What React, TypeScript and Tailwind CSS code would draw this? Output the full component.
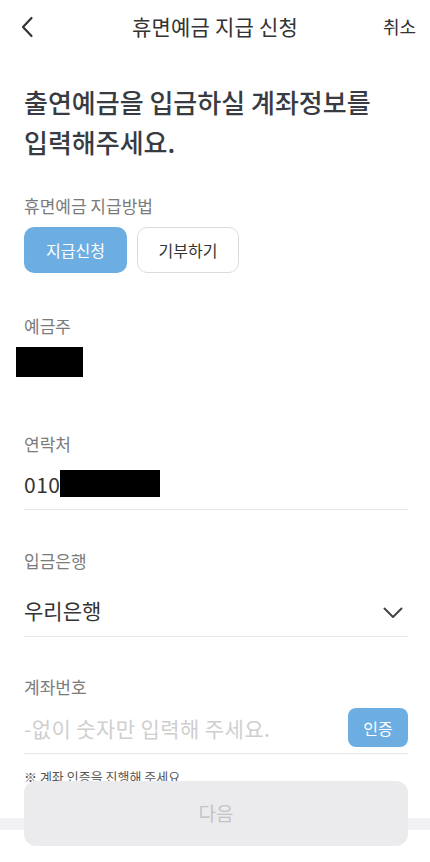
import React from 'react';

const font = { fontFamily: '"Noto Sans CJK KR", "Noto Sans", sans-serif' };

interface FieldLabelProps {
  children: React.ReactNode;
}

const FieldLabel = ({ children }: FieldLabelProps) => (
  <div className="text-[17px] leading-[24px] text-[#7b7b7b]">{children}</div>
);

export default function App() {
  return (
    <div className="relative w-full h-[862px] overflow-hidden bg-white text-[#333]" style={font}>
      {/* Header */}
      <header className="relative h-[52px] flex items-center justify-center">
        <button className="absolute left-[18px] top-[14px] w-[18px] h-[26px] flex items-center justify-center">
          <svg width="14" height="22" viewBox="0 0 14 22" fill="none">
            <path d="M11.5 2 L3 11 L11.5 20" stroke="#333" strokeWidth="2.2" strokeLinecap="round" strokeLinejoin="round" />
          </svg>
        </button>
        <h1 className="text-[21px] leading-[28px] text-[#333] tracking-[0.2px]">휴면예금 지급 신청</h1>
        <button className="absolute right-[14px] top-[12px] text-[18px] leading-[28px] text-[#333]">취소</button>
      </header>

      <main className="pl-[24px] pr-[22px]">
        {/* Heading */}
        <h2 className="mt-[30px] text-[26px] leading-[40px] font-medium text-[#383b42]">
          출연예금을 입금하실 계좌정보를
          <br />
          입력해주세요.
        </h2>

        {/* Method */}
        <div className="mt-[32px]">
          <FieldLabel>휴면예금 지급방법</FieldLabel>
          <div className="mt-[9px] flex gap-[10px]">
            <button className="w-[103px] h-[46px] rounded-[10px] bg-[#6daee2] text-white text-[16px]">지급신청</button>
            <button className="w-[102px] h-[46px] rounded-[10px] border border-[#dcdcdc] bg-white text-[16px] text-[#333]">
              기부하기
            </button>
          </div>
        </div>

        {/* Owner */}
        <div className="mt-[41px]">
          <FieldLabel>예금주</FieldLabel>
          <div className="mt-[9px] h-[30px] flex items-center">
            <div className="-ml-[8px] w-[67px] h-[30px] bg-black" />
          </div>
        </div>

        {/* Phone */}
        <div className="mt-[55px]">
          <FieldLabel>연락처</FieldLabel>
          <div className="mt-[14px] pb-[12px] border-b border-[#e6e6e6] h-[40px] flex items-start">
            <span className="text-[21px] leading-[28px] text-[#333] tracking-[0.5px]">010</span>
            <div className="w-[100px] h-[27px] bg-black" />
          </div>
        </div>

        {/* Bank */}
        <div className="mt-[39px]">
          <FieldLabel>입금은행</FieldLabel>
          <div className="mt-[22px] pb-[11px] border-b border-[#e6e6e6] flex items-center justify-between">
            <span className="text-[21px] leading-[30px] text-[#333]">우리은행</span>
            <svg className="mr-[5px] mt-[6px]" width="20" height="12" viewBox="0 0 20 12" fill="none">
              <path d="M1.5 1.5 L10 10 L18.5 1.5" stroke="#444" strokeWidth="2" strokeLinecap="round" strokeLinejoin="round" />
            </svg>
          </div>
        </div>

        {/* Account */}
        <div className="mt-[38px]">
          <FieldLabel>계좌번호</FieldLabel>
          <div className="mt-[9px] pb-[6px] border-b border-[#e6e6e6] flex items-center justify-between">
            <input
              className="flex-1 min-w-0 text-[21px] leading-[28px] text-[#333] tracking-[0.4px] placeholder:text-[#cfcfcf] outline-none bg-transparent"
              placeholder="-없이 숫자만 입력해 주세요."
              style={font}
            />
            <button className="w-[60px] h-[39px] rounded-[8px] bg-[#6daee2] text-white text-[16px]">인증</button>
          </div>
          <p className="mt-[14px] text-[13px] leading-[18px] text-[#555]">※ 계좌 인증을 진행해 주세요</p>
        </div>
      </main>

      {/* Bottom band */}
      <div className="mt-[32px] h-[12px] bg-[#f2f2f4]" />

      {/* Next button */}
      <div className="absolute left-[24px] right-[22px] top-[781px]">
        <button className="w-full h-[65px] rounded-[12px] bg-[#ebebee] text-[19px] text-[#c3c3c6]">다음</button>
      </div>
    </div>
  );
}
